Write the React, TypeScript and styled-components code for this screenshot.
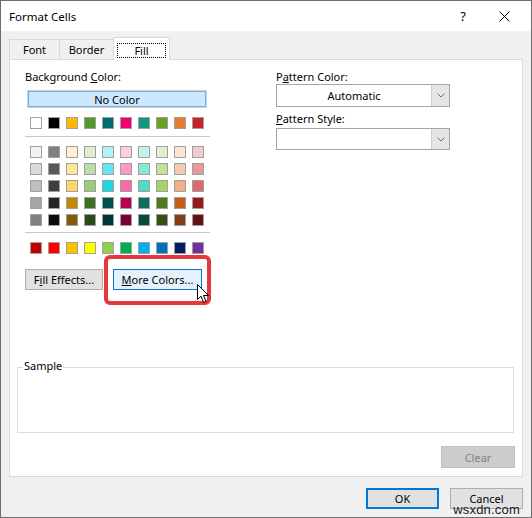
import React from 'react';
import styled, { createGlobalStyle } from 'styled-components';

const GlobalStyle = createGlobalStyle`
  html, body {
    margin: 0;
    padding: 0;
    background: #ffffff;
  }
  body {
    font-family: "Noto Sans", "Open Sans", "Liberation Sans", sans-serif;
    font-size: 11px;
    color: #000;
  }
`;

const Window = styled.div`
  position: relative;
  width: 532px;
  height: 518px;
  box-sizing: border-box;
  border: 1px solid #6d6d6d;
  background: #f0f0f0;
  display: flex;
  flex-direction: column;
  overflow: hidden;
`;

const TitleBar = styled.div`
  height: 30px;
  background: #fff;
  display: flex;
  align-items: center;
  padding-left: 8px;
  font-size: 11.5px;
`;

const TitleText = styled.div`
  flex: 1;
`;

const TitleButton = styled.div<{ $w: number }>`
  width: ${(p) => p.$w}px;
  height: 30px;
  display: flex;
  align-items: center;
  justify-content: center;
  font-size: 13px;
`;

const TabStrip = styled.div`
  display: flex;
  align-items: flex-end;
  height: 23px;
  margin: 5px 0 0 8px;
  position: relative;
  z-index: 2;
`;

const Tab = styled.div<{ $active?: boolean; $w: number }>`
  width: ${(p) => p.$w}px;
  height: ${(p) => (p.$active ? 23 : 20)}px;
  box-sizing: border-box;
  border: 1px solid #d9d9d9;
  border-bottom: none;
  margin-left: -1px;
  background: ${(p) => (p.$active ? '#fff' : '#f0f0f0')};
  margin-bottom: ${(p) => (p.$active ? '-1px' : '0')};
  display: flex;
  align-items: center;
  justify-content: center;
  padding: ${(p) => (p.$active ? '5px 3px 2px' : '0')};
  &:first-child {
    margin-left: 0;
  }
`;

const FocusRect = styled.div`
  flex: 1;
  align-self: stretch;
  border: 1px dotted #000;
  display: flex;
  align-items: center;
  justify-content: center;
`;

const Panel = styled.div`
  margin: 0 8px;
  height: 418px;
  box-sizing: border-box;
  border: 1px solid #d9d9d9;
  background: #fff;
  padding: 9px 8px 0 7px;
  display: flex;
  flex-direction: column;
`;

const TopSection = styled.div`
  display: flex;
  height: 222px;
`;

const LeftColumn = styled.div`
  margin-left: 8px;
  width: 186px;
  display: flex;
  flex-direction: column;
`;

const RightColumn = styled.div`
  margin-left: 65px;
  width: 174px;
  display: flex;
  flex-direction: column;
`;

const Label = styled.div<{ $gap?: number }>`
  line-height: 15px;
  height: 15px;
  margin-top: ${(p) => p.$gap ?? 0}px;
  white-space: nowrap;
`;

const NoColorButton = styled.div`
  margin: 6px 0 0 2px;
  width: 180px;
  height: 18px;
  box-sizing: border-box;
  border: 1px solid #b6dbf7;
  box-shadow: inset 0 0 0 1px #8fa6bb;
  background: #cce8ff;
  display: flex;
  align-items: center;
  justify-content: center;
`;

const SwatchGrid = styled.div<{ $gap: number }>`
  display: grid;
  grid-template-columns: repeat(10, 12px);
  grid-auto-rows: 12px;
  column-gap: 6px;
  row-gap: 5px;
  margin: ${(p) => p.$gap}px 0 0 5px;
`;

const Swatch = styled.div<{ $c: string }>`
  box-sizing: border-box;
  border: 1px solid #a0a0a0;
  background: ${(p) => p.$c};
`;

const Separator = styled.div<{ $gap: number }>`
  margin-top: ${(p) => p.$gap}px;
  height: 1px;
  width: 185px;
  background: #c8c8c8;
`;

const ButtonRow = styled.div`
  display: flex;
  gap: 10px;
  margin-top: 15px;
`;

const Button = styled.div<{ $w: number; $h?: number; $variant?: 'hot' | 'default' | 'disabled' }>`
  position: relative;
  width: ${(p) => p.$w}px;
  height: ${(p) => p.$h ?? 21}px;
  box-sizing: border-box;
  display: flex;
  align-items: center;
  justify-content: center;
  white-space: nowrap;
  background: ${(p) =>
    p.$variant === 'hot' ? '#e5f1fb' : p.$variant === 'disabled' ? '#cccccc' : '#e1e1e1'};
  border: ${(p) =>
    p.$variant === 'hot'
      ? '1px solid #0078d7'
      : p.$variant === 'default'
      ? '2px solid #0078d7'
      : p.$variant === 'disabled'
      ? '1px solid #bfbfbf'
      : '1px solid #adadad'};
  color: ${(p) => (p.$variant === 'disabled' ? '#838383' : '#000')};
`;

const Highlight = styled.div`
  position: relative;
  &::after {
    content: '';
    position: absolute;
    left: -9px;
    right: -9px;
    top: -14px;
    bottom: -15px;
    border: 4px solid #e2383e;
    border-radius: 6px;
    pointer-events: none;
  }
`;

const Cursor = styled.svg`
  position: absolute;
  left: 84px;
  top: 15px;
  z-index: 3;
`;

const Dropdown = styled.div<{ $h: number; $gap: number }>`
  margin-top: ${(p) => p.$gap}px;
  height: ${(p) => p.$h}px;
  box-sizing: border-box;
  border: 1px solid #a5a5a5;
  display: flex;
`;

const DropdownValue = styled.div`
  flex: 1;
  display: flex;
  align-items: center;
  justify-content: center;
`;

const DropdownArrow = styled.div`
  width: 17px;
  background: #e5e5e5;
  border-left: 1px solid #cfcfcf;
  display: flex;
  align-items: center;
  justify-content: center;
`;

const GroupBox = styled.div`
  position: relative;
  margin-top: 76px;
  height: 66px;
  box-sizing: border-box;
  border: 1px solid #dcdcdc;
`;

const Legend = styled.span`
  position: absolute;
  left: 5px;
  top: -10px;
  padding: 0 1px;
  background: #fff;
  line-height: 15px;
`;

const ClearRow = styled.div`
  display: flex;
  justify-content: flex-end;
  margin: 13px -1px 0 0;
`;

const Footer = styled.div`
  display: flex;
  justify-content: flex-end;
  gap: 11px;
  padding: 11px 8px 0 0;
`;

const Watermark = styled.div`
  position: absolute;
  right: 11px;
  bottom: 1px;
  font-family: "Liberation Sans", Arial, sans-serif;
  font-size: 13px;
  line-height: 13px;
  color: #1a1a1a;
  letter-spacing: 0.2px;
`;

const Key = styled.span`
  text-decoration: underline;
  text-underline-offset: 1px;
`;

const themeRow = ['#ffffff', '#000000', '#ffb800', '#4f9a2a', '#006b6e', '#f4006d', '#12947f', '#6aa123', '#e87b34', '#c92129'];

const tints = [
  ['#f2f2f2', '#7f7f7f', '#fff1cc', '#dcefd2', '#b1f3f6', '#ffcce2', '#c3f3ea', '#e1f0cc', '#fbe5d6', '#f4cccd'],
  ['#d9d9d9', '#595959', '#ffe399', '#b9dfa6', '#67e5ec', '#ff99c4', '#88e8d6', '#c4e199', '#f6caad', '#ea9a9c'],
  ['#bfbfbf', '#404040', '#ffd566', '#95cf7a', '#1ad8e2', '#ff66a7', '#4cdcc2', '#a6d266', '#f2b084', '#e0676b'],
  ['#a6a6a6', '#262626', '#bf8a00', '#3b731f', '#005052', '#b70052', '#0d6f5f', '#4f791a', '#c65e18', '#96191f'],
  ['#808080', '#0d0d0d', '#805c00', '#274d15', '#003537', '#7a0036', '#094a3f', '#355011', '#843f10', '#641115'],
];

const standard = ['#c00000', '#ff0000', '#ffc000', '#ffff00', '#92d050', '#00b050', '#00b0f0', '#0070c0', '#002060', '#7030a0'];

const Chevron = () => (
  <svg width="8" height="5" viewBox="0 0 8 5">
    <path d="M0.5 0.5 L4 4 L7.5 0.5" fill="none" stroke="#6b6b6b" strokeWidth="1" />
  </svg>
);

const App = () => {
  return (
    <>
      <GlobalStyle />
      <Window>
        <TitleBar>
          <TitleText>Format Cells</TitleText>
          <TitleButton $w={28}>?</TitleButton>
          <TitleButton $w={54}>
            <svg width="11" height="11" viewBox="0 0 11 11">
              <path d="M0.5 0.5 L10.5 10.5 M10.5 0.5 L0.5 10.5" stroke="#000" strokeWidth="1" />
            </svg>
          </TitleButton>
        </TitleBar>

        <TabStrip>
          <Tab $w={51}>Font</Tab>
          <Tab $w={55}>Border</Tab>
          <Tab $w={57} $active>
            <FocusRect>Fill</FocusRect>
          </Tab>
        </TabStrip>

        <Panel>
          <TopSection>
            <LeftColumn>
              <Label>
                Background <Key>C</Key>olor:
              </Label>
              <NoColorButton>No Color</NoColorButton>
              <SwatchGrid $gap={9}>
                {themeRow.map((c, i) => (
                  <Swatch key={i} $c={c} />
                ))}
              </SwatchGrid>
              <Separator $gap={7} />
              <SwatchGrid $gap={9}>
                {tints.flat().map((c, i) => (
                  <Swatch key={i} $c={c} />
                ))}
              </SwatchGrid>
              <Separator $gap={6} />
              <SwatchGrid $gap={9}>
                {standard.map((c, i) => (
                  <Swatch key={i} $c={c} />
                ))}
              </SwatchGrid>
              <ButtonRow>
                <Button $w={78}>
                  F<Key>i</Key>ll Effects...
                </Button>
                <Highlight>
                  <Button $w={89} $variant="hot">
                    <Key>M</Key>ore Colors...
                  </Button>
                  <Cursor width="13" height="20" viewBox="0 0 13 20">
                    <path
                      d="M0.5 0.5 L0.5 15.5 L4 12.2 L6.6 18.5 L9 17.5 L6.5 11.5 L11.5 11.5 Z"
                      fill="#fff"
                      stroke="#000"
                      strokeWidth="1"
                      strokeLinejoin="round"
                    />
                  </Cursor>
                </Highlight>
              </ButtonRow>
            </LeftColumn>

            <RightColumn>
              <Label>
                P<Key>a</Key>ttern Color:
              </Label>
              <Dropdown $h={23} $gap={0}>
                <DropdownValue>Automatic</DropdownValue>
                <DropdownArrow>
                  <Chevron />
                </DropdownArrow>
              </Dropdown>
              <Label $gap={4}>
                <Key>P</Key>attern Style:
              </Label>
              <Dropdown $h={22} $gap={2}>
                <DropdownValue />
                <DropdownArrow>
                  <Chevron />
                </DropdownArrow>
              </Dropdown>
            </RightColumn>
          </TopSection>

          <GroupBox>
            <Legend>Sample</Legend>
          </GroupBox>

          <ClearRow>
            <Button $w={74} $h={22} $variant="disabled">
              Clear
            </Button>
          </ClearRow>
        </Panel>

        <Footer>
          <Button $w={73} $variant="default">
            OK
          </Button>
          <Button $w={73}>Cancel</Button>
        </Footer>
        <Watermark>wsxdn.com</Watermark>
      </Window>
    </>
  );
};

export default App;
